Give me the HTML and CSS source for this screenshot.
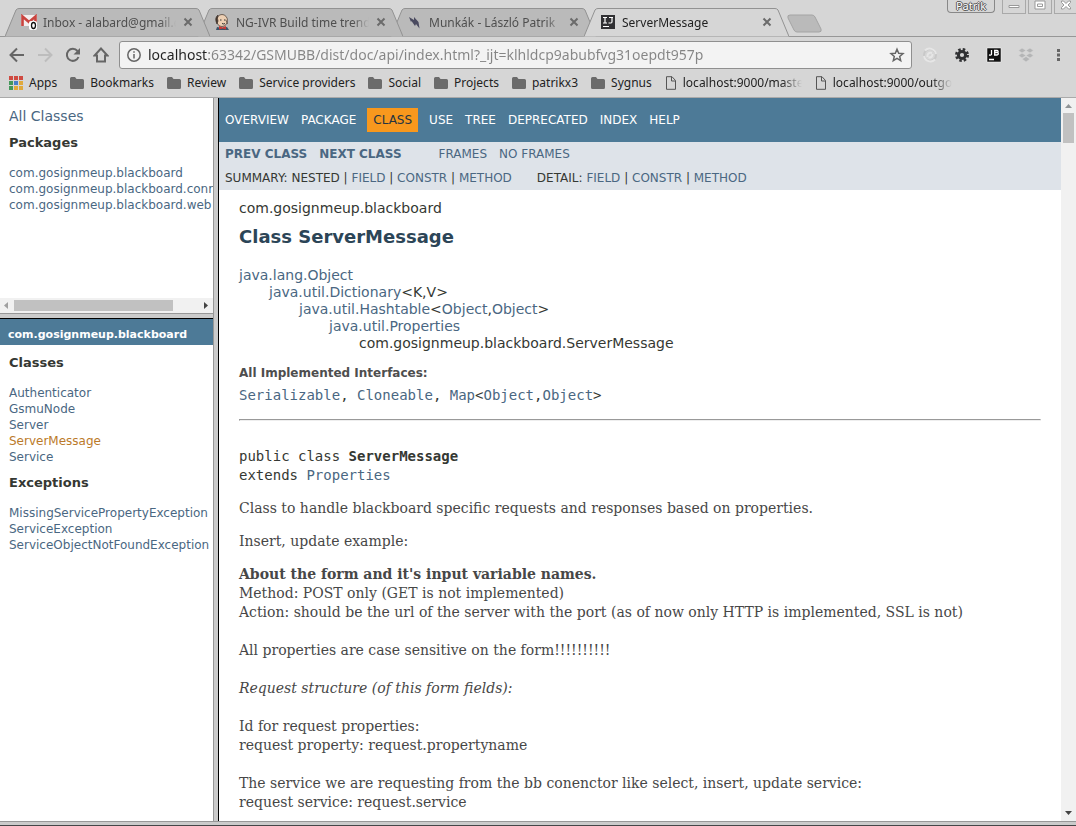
FILE: index.html
```
<!DOCTYPE html>
<html lang="en">
  <head>
    <meta charset="UTF-8" />
    <meta name="viewport" content="width=device-width, initial-scale=1.0" />
    <title>ServerMessage</title>
    <link rel="stylesheet" href="styles.css">
  </head>
  <body>
    <div class="browser">
      <header class="chrome">
        <div class="tabstrip">
          <div class="tab tab--first">
            <svg class="tab-shape" viewBox="0 0 205 29"><path d="M0 28.5 11 2Q12 .5 14 .5H191Q193 .5 194 2L205 28.5"/></svg>
            <svg class="favicon" viewBox="0 0 16 16"><path d="M0 1h16v11H0z" fill="#f4eeee"/><path d="M1.500 12V2.500L8 8l6.500-5.500V12" fill="none" stroke="#c9443f" stroke-width="2.600"/><rect x="8" y="7" width="8" height="9" rx="2" fill="#fff"/><ellipse cx="12.500" cy="11.500" rx="2" ry="3" fill="none" stroke="#111" stroke-width="1.300"/></svg>
            <span class="tab-title">Inbox - alabard@gmail.com</span>
            <button class="tab-close" aria-label="Close tab"><svg viewBox="0 0 10 10"><path d="M1.500 1.500l7 7M8.500 1.500l-7 7"/></svg></button>
          </div>
          <div class="tab tab--second">
            <svg class="tab-shape" viewBox="0 0 205 29"><path d="M0 28.5 11 2Q12 .5 14 .5H191Q193 .5 194 2L205 28.5"/></svg>
            <svg class="favicon" viewBox="0 0 16 16"><path d="M2 16l1-3 5 1 5-1 2 3z" fill="#3b5368"/><ellipse cx="8" cy="6.500" rx="5.500" ry="6" fill="#edd0b4" stroke="#54463c" stroke-width=".8"/><path d="M3 10Q0 4 4 1q-1 4 0 6zM12 6l1.500 4" fill="#44372f" stroke="#44372f" stroke-width=".7"/><path d="M6 6h1.500M10 6h1.500M8 9.500q2 1 3 0" stroke="#333" fill="none"/><path d="M5 12l3.500 1.500L12 12v3.500l-3.500-1-3.500 1z" fill="#c93a35"/></svg>
            <span class="tab-title">NG-IVR Build time trend [Jenkins]</span>
            <button class="tab-close" aria-label="Close tab"><svg viewBox="0 0 10 10"><path d="M1.500 1.500l7 7M8.500 1.500l-7 7"/></svg></button>
          </div>
          <div class="tab tab--third">
            <svg class="tab-shape" viewBox="0 0 205 29"><path d="M0 28.5 11 2Q12 .5 14 .5H191Q193 .5 194 2L205 28.5"/></svg>
            <svg class="favicon" viewBox="0 0 16 16"><path d="M2 3l5 3V3l4.500 5 1 6.500L9 10l-1 2-3.500-5L4 8z" fill="#4b4b60"/></svg>
            <span class="tab-title">Munkák - László Patrik</span>
            <button class="tab-close" aria-label="Close tab"><svg viewBox="0 0 10 10"><path d="M1.500 1.500l7 7M8.500 1.500l-7 7"/></svg></button>
          </div>
          <div class="tab tab--active">
            <svg class="tab-shape" viewBox="0 0 205 29"><path d="M0 28.5 11 2Q12 .5 14 .5H191Q193 .5 194 2L205 28.5"/></svg>
            <svg class="favicon" viewBox="0 0 16 16"><path d="M1 1h14v14H1z" fill="#303033"/><path d="M3 3.500h4M5 3.500v5M3 9h4M9 3.500h4M12 3.500v4Q12 9 11 9H8.500M3 12.500h6" fill="none" stroke="#fff" stroke-width="1.200"/></svg>
            <span class="tab-title">ServerMessage</span>
            <button class="tab-close" aria-label="Close tab"><svg viewBox="0 0 10 10"><path d="M1.500 1.500l7 7M8.500 1.500l-7 7"/></svg></button>
          </div>
          <button class="new-tab" aria-label="New tab"><svg viewBox="0 0 36 19"><path d="M3 1H25Q27 1 28 3L34 15Q35 18 32 18H10Q8 18 7 16L1 4Q0 1 3 1z"/></svg></button>
          <div class="window-controls">
            <button class="profile">Patrik</button>
            <button class="window-button" aria-label="Minimize"><svg viewBox="0 0 14 12"><path d="M2 5.500h10v2H2z"/></svg></button>
            <button class="window-button" aria-label="Maximize"><svg viewBox="0 0 14 12"><path d="M2 1h10v8H2zM4.500 4h5v2.500h-5z"/></svg></button>
            <button class="window-button" aria-label="Close"><svg viewBox="0 0 14 12"><path d="M2.500 1h2L7 3.500 9.500 1h2v1.500L9 5l2.500 2.500V9h-2L7 6.500 4.500 9h-2V7.500L5 5 2.500 2.500z"/></svg></button>
          </div>
        </div>

        <div class="toolbar">
          <div class="toolbar-nav">
            <button class="icon-button" aria-label="Back"><svg viewBox="0 0 16 16"><path d="M15 8H2.500M8 1.500L1.500 8 8 14.500"/></svg></button>
            <button class="icon-button icon-button--off" aria-label="Forward"><svg viewBox="0 0 16 16"><path d="M1 8h12.500M8 1.500L14.500 8 8 14.500"/></svg></button>
            <button class="icon-button" aria-label="Reload"><svg viewBox="0 0 16 16"><path d="M13.500 10A6 6 0 1 1 12.500 4"/><path d="M15 1v6.500H8.500z" class="solid"/></svg></button>
            <button class="icon-button" aria-label="Home"><svg viewBox="0 0 16 16"><path d="M8 1.500L1.500 8.500H4v6h8v-6h2.500z"/></svg></button>
          </div>
          <div class="omnibox">
            <svg class="info" viewBox="0 0 14 14"><circle cx="7" cy="7" r="6.200"/><path d="M7 6v4.500M7 3.300v1.500"/></svg>
            <input class="url" type="text" aria-label="Address" spellcheck="false" value="localhost:63342/GSMUBB/dist/doc/api/index.html?_ijt=klhldcp9abubfvg31oepdt957p">
            <button class="star" aria-label="Bookmark this page"><svg viewBox="0 0 16 16"><path d="M8 2.200l1.700 4 4.300.4-3.300 2.800 1 4.200L8 11.400l-3.700 2.200 1-4.200L2 6.600l4.300-.4z"/></svg></button>
          </div>
          <div class="extensions">
            <button class="icon-button" aria-label="Extension"><svg class="orb" viewBox="0 0 16 16"><circle cx="8" cy="8" r="6"/><path class="orb-shine" d="M3 3.500A6.500 6.500 0 0 1 14 7M13 12.500A6.500 6.500 0 0 1 2 9M5.500 10Q5 5 10 6M10.500 7q0 4-4 3.500"/></svg></button>
            <button class="icon-button" aria-label="Settings"><svg class="gear" viewBox="0 0 16 16"><circle class="gear-teeth" cx="8" cy="8" r="5.700"/><circle cx="8" cy="8" r="3.600"/></svg></button>
            <button class="icon-button" aria-label="JetBrains"><svg class="jetbrains" viewBox="0 0 16 16"><path class="jetbrains-box" d="M1 1h14v14H1z"/><path d="M5.500 3v4q0 1.500-2.500 1M8.700 3v5.500M8 3.500h3q1.500 0 1 1.900H9M9 5.700h2.500q2 1.300-.3 2.300H8M3 12.500h5"/></svg></button>
            <button class="icon-button" aria-label="Dropbox"><svg class="dropbox" viewBox="0 0 16 16"><path d="M4 1l4 2.500L4 6 .5 3.500zM12 1l3.500 2.500L12 6 8 3.500zM.5 8.500L4 6l4 2.500L4 11zM8 8.500L12 6l3.500 2.500L12 11zM4 12l4-2.500 4 2.500-4 3z"/></svg></button>
            <button class="icon-button" aria-label="Menu"><svg viewBox="0 0 16 16"><path d="M7 2h3v3H7zM7 6.500h3v3H7zM7 11h3v3H7z" class="solid"/></svg></button>
          </div>
        </div>

        <nav class="bookmarks">
          <a href="#"><svg class="apps" viewBox="0 0 14 14"><path d="M0 0h4v4H0zM5 0h4v4H5zM10 0h4v4h-4z" fill="#cf4a41"/><path d="M0 5h4v4H0zM0 10h4v4H0z" fill="#43985a"/><path d="M5 5h4v4H5z" fill="#467fc8"/><path d="M10 5h4v4h-4zM5 10h4v4H5zM10 10h4v4h-4z" fill="#e0a93b"/></svg>Apps</a>
          <a href="#"><svg class="folder" viewBox="0 0 14 12"><path d="M0 1.500Q0 0 1.500 0H5l1.500 2h6Q14 2 14 3.500v7q0 1.500-1.500 1.500h-11Q0 12 0 10.500z"/></svg>Bookmarks</a>
          <a href="#"><svg class="folder" viewBox="0 0 14 12"><path d="M0 1.500Q0 0 1.500 0H5l1.500 2h6Q14 2 14 3.500v7q0 1.500-1.500 1.500h-11Q0 12 0 10.500z"/></svg>Review</a>
          <a href="#"><svg class="folder" viewBox="0 0 14 12"><path d="M0 1.500Q0 0 1.500 0H5l1.500 2h6Q14 2 14 3.500v7q0 1.500-1.500 1.500h-11Q0 12 0 10.500z"/></svg>Service providers</a>
          <a href="#"><svg class="folder" viewBox="0 0 14 12"><path d="M0 1.500Q0 0 1.500 0H5l1.500 2h6Q14 2 14 3.500v7q0 1.500-1.500 1.500h-11Q0 12 0 10.500z"/></svg>Social</a>
          <a href="#"><svg class="folder" viewBox="0 0 14 12"><path d="M0 1.500Q0 0 1.500 0H5l1.500 2h6Q14 2 14 3.500v7q0 1.500-1.500 1.500h-11Q0 12 0 10.500z"/></svg>Projects</a>
          <a href="#"><svg class="folder" viewBox="0 0 14 12"><path d="M0 1.500Q0 0 1.500 0H5l1.500 2h6Q14 2 14 3.500v7q0 1.500-1.500 1.500h-11Q0 12 0 10.500z"/></svg>patrikx3</a>
          <a href="#"><svg class="folder" viewBox="0 0 14 12"><path d="M0 1.500Q0 0 1.500 0H5l1.500 2h6Q14 2 14 3.500v7q0 1.500-1.500 1.500h-11Q0 12 0 10.500z"/></svg>Sygnus</a>
          <a href="#"><svg class="file" viewBox="0 0 12 14"><path d="M1.500.7H7L10.500 4.500v8.800h-9zM6.500 1v4h4"/></svg><span class="bookmark-label">localhost:9000/master</span></a>
          <a href="#"><svg class="file" viewBox="0 0 12 14"><path d="M1.500.7H7L10.500 4.500v8.800h-9zM6.500 1v4h4"/></svg><span class="bookmark-label">localhost:9000/outgoing</span></a>
        </nav>
      </header>

      <div class="frameset">
        <div class="left-frames">
          <section class="package-list">
            <div class="frame-body">
              <a class="all-classes" href="#">All Classes</a>
              <h2 class="frame-title">Packages</h2>
              <ul class="frame-links">
                <li><a href="#">com.gosignmeup.blackboard</a></li>
                <li><a href="#">com.gosignmeup.blackboard.connector</a></li>
                <li><a href="#">com.gosignmeup.blackboard.web</a></li>
              </ul>
            </div>
            <div class="hscroll">
              <svg viewBox="0 0 14 15"><path d="M8 4v7L4 7.500z" fill="#a0a0a0"/></svg>
              <div class="hscroll-thumb"></div>
              <svg viewBox="0 0 14 15"><path d="M5 4v7l4-3.500z" fill="#444"/></svg>
            </div>
          </section>
          <section class="package-frame">
            <h1 class="bar"><a href="#">com.gosignmeup.blackboard</a></h1>
            <div class="frame-body">
              <h2 class="frame-title">Classes</h2>
              <ul class="frame-links">
                <li><a href="#">Authenticator</a></li>
                <li><a href="#">GsmuNode</a></li>
                <li><a href="#">Server</a></li>
                <li><a class="hover" href="#">ServerMessage</a></li>
                <li><a href="#">Service</a></li>
              </ul>
              <h2 class="frame-title">Exceptions</h2>
              <ul class="frame-links">
                <li><a href="#">MissingServicePropertyException</a></li>
                <li><a href="#">ServiceException</a></li>
                <li><a href="#">ServiceObjectNotFoundException</a></li>
              </ul>
            </div>
          </section>
        </div>

        <main class="class-frame">
          <div class="document">
            <ul class="top-nav">
              <li><a href="#">Overview</a></li>
              <li><a href="#">Package</a></li>
              <li class="nav-current">Class</li>
              <li><a href="#">Use</a></li>
              <li><a href="#">Tree</a></li>
              <li><a href="#">Deprecated</a></li>
              <li><a href="#">Index</a></li>
              <li><a href="#">Help</a></li>
            </ul>
            <div class="sub-nav">
              <div class="sub-nav-row">
                <ul class="nav-list">
                  <li><a class="strong" href="#">Prev Class</a></li>
                  <li><a class="strong" href="#">Next Class</a></li>
                </ul>
                <ul class="nav-list nav-list--frames">
                  <li><a href="#">Frames</a></li>
                  <li><a href="#">No Frames</a></li>
                </ul>
              </div>
              <div class="sub-nav-row sub-nav-row--detail">
                <div>Summary: Nested | <a href="#">Field</a> | <a href="#">Constr</a> | <a href="#">Method</a></div>
                <div>Detail: <a href="#">Field</a> | <a href="#">Constr</a> | <a href="#">Method</a></div>
              </div>
            </div>

            <div class="content">
              <div class="subtitle">com.gosignmeup.blackboard</div>
              <h2 class="title">Class ServerMessage</h2>
              <ul class="inheritance">
                <li><a href="#">java.lang.Object</a></li>
                <li>
                  <ul class="inheritance">
                    <li><a href="#">java.util.Dictionary</a>&lt;K,V&gt;</li>
                    <li>
                      <ul class="inheritance">
                        <li><a href="#">java.util.Hashtable</a>&lt;<a href="#">Object</a>,<a href="#">Object</a>&gt;</li>
                        <li>
                          <ul class="inheritance">
                            <li><a href="#">java.util.Properties</a></li>
                            <li>
                              <ul class="inheritance">
                                <li>com.gosignmeup.blackboard.ServerMessage</li>
                              </ul>
                            </li>
                          </ul>
                        </li>
                      </ul>
                    </li>
                  </ul>
                </li>
              </ul>
              <dl class="interfaces">
                <dt>All Implemented Interfaces:</dt>
                <dd><a href="#">Serializable</a>, <a href="#">Cloneable</a>, <a href="#">Map</a>&lt;<a href="#">Object</a>,<a href="#">Object</a>&gt;</dd>
              </dl>
              <hr>
              <pre class="signature">public class <b>ServerMessage</b>
extends <a href="#">Properties</a></pre>
              <div class="block">
                <p>Class to handle blackboard specific requests and responses based on properties.</p>
                <p>Insert, update example:</p>
                <p>
                  <b>About the form and it's input variable names.</b><br>
                  Method: POST only (GET is not implemented)<br>
                  Action: should be the url of the server with the port (as of now only HTTP is implemented, SSL is not)<br>
                  <br>
                  All properties are case sensitive on the form!!!!!!!!!!<br>
                  <br>
                  <i>Request structure (of this form fields):</i><br>
                  <br>
                  Id for request properties:<br>
                  request property: request.propertyname<br>
                  <br>
                  The service we are requesting from the bb conenctor like select, insert, update service:<br>
                  request service: request.service
                </p>
              </div>
            </div>
          </div>
          <div class="vscroll">
            <svg viewBox="0 0 15 15"><path d="M4 10h7L7.500 6z" fill="#909496"/></svg>
            <div class="vscroll-thumb"></div>
            <svg class="vscroll-down" viewBox="0 0 15 15"><path d="M4 5h7L7.500 9z" fill="#444"/></svg>
          </div>
        </main>
      </div>
    </div>
  </body>
</html>
```
FILE: styles.css
```
:root {
  --chrome-bg: #d6d6d6;
  --tab-bg: #bababa;
  --line: #979797;
  --bar: #4d7a97;
  --subnav: #dee3e9;
  --link: #4a6782;
  --text: #353833;
  --text-soft: #474747;
}
* {
  box-sizing: border-box;
}
body {
  margin: 0;
  color: var(--text);
  font-family: "DejaVu Sans", Arial, sans-serif;
  font-size: 14px;
}
ul {
  list-style: none;
  margin: 0;
  padding: 0;
}
a {
  color: var(--link);
  text-decoration: none;
}
button {
  border: 0;
  padding: 0;
  background: none;
  font: inherit;
}
svg {
  display: block;
  flex: none;
}

.browser {
  display: flex;
  flex-direction: column;
  height: 100vh;
  overflow: hidden;
  background: #cbcbcb;
  border-bottom: 1px solid #454648;
  padding-bottom: 3px;
}

/* window chrome */
.chrome {
  flex: none;
  background: var(--chrome-bg);
  border-bottom: 1px solid #aaa;
  font-family: "Noto Sans", sans-serif;
  font-size: 12px;
}
.tabstrip {
  display: flex;
  align-items: flex-end;
  height: 37px;
  padding-left: 5px;
  border-bottom: 1px solid var(--line);
}
.tab {
  position: relative;
  display: flex;
  align-items: center;
  width: 205px;
  height: 28px;
  padding: 0 17px 0 16px;
  margin-right: -12px;
  color: #4f4f4f;
}
.tab-shape {
  position: absolute;
  left: 0;
  top: 0;
  z-index: -1;
  width: 205px;
  height: 29px;
  fill: var(--tab-bg);
  stroke: #929292;
}
.tab--first {
  z-index: 3;
}
.tab--second {
  z-index: 2;
}
.tab--third {
  z-index: 1;
}
.tab--active {
  z-index: 4;
  color: #222;
}
.tab--active .tab-shape {
  fill: var(--chrome-bg);
}
.favicon {
  width: 16px;
  height: 16px;
  margin-right: 6px;
}
.tab-title {
  flex: 1;
  min-width: 0;
  overflow: hidden;
  white-space: nowrap;
  margin-right: 7px;
  mask-image: linear-gradient(to right, #000 calc(100% - 16px), transparent);
}
.tab-close svg {
  width: 10px;
  height: 10px;
  stroke: #6b6b6b;
  stroke-width: 2;
}
.new-tab {
  align-self: center;
  margin: 10px 0 0 10px;
}
.new-tab svg {
  width: 36px;
  height: 19px;
  fill: var(--tab-bg);
  stroke: #a4a4a4;
}
.window-controls {
  display: flex;
  gap: 2px;
  align-self: flex-start;
  margin-left: auto;
}
.profile {
  width: 48px;
  height: 13px;
  margin-right: 5px;
  border: 1px solid #888;
  border-top: 0;
  border-radius: 0 0 4px 4px;
  font-size: 11px;
  line-height: 12px;
  color: #fff;
  text-shadow: 1px 0 #555, -1px 0 #555, 0 1px #555, 0 -1px #555;
}
.window-button {
  display: flex;
  justify-content: center;
  width: 24px;
  height: 14px;
  border: 1px solid #a9a9a9;
  border-top: 0;
}
.window-button:last-child {
  width: 22px;
  border-right: 0;
}
.window-button svg {
  width: 14px;
  height: 12px;
  fill: #fff;
  stroke: #999;
}

.toolbar {
  display: flex;
  align-items: center;
  height: 36px;
  padding: 0 8px 0 9px;
}
.toolbar-nav {
  display: flex;
  gap: 12px;
  margin-right: 10px;
}
.icon-button svg {
  width: 16px;
  height: 16px;
  fill: none;
  stroke: #666;
  stroke-width: 2;
}
.icon-button--off svg {
  stroke: #bdbdbd;
}
.icon-button .solid {
  fill: #666;
  stroke: none;
}
.icon-button .orb {
  stroke: #c8c8c8;
}
.orb-shine {
  stroke: #e6e6e6;
}
.icon-button .gear {
  stroke: #303133;
  stroke-width: 3;
}
.gear-teeth {
  stroke-width: 2.6;
  stroke-dasharray: 2.48 2;
}
.icon-button .jetbrains {
  stroke: #fff;
  stroke-width: 1.3;
}
.jetbrains-box {
  fill: #111;
  stroke-width: 0.5;
}
.icon-button .dropbox {
  fill: #b4b5b6;
  stroke: #d6d6d6;
  stroke-width: 0.6;
}
.omnibox {
  flex: 1;
  display: flex;
  align-items: center;
  height: 28px;
  padding: 0 6px 0 7px;
  background: #f3f3f3;
  border: 1px solid #8f8f8f;
  border-radius: 3px;
}
.info {
  width: 14px;
  height: 14px;
  margin-right: 7px;
  fill: none;
  stroke: #666;
  stroke-width: 1.5;
}
.url {
  flex: 1;
  min-width: 0;
  height: 24px;
  padding: 0 0 2px;
  border: 0;
  outline: 0;
  font-family: "Noto Sans", sans-serif;
  font-size: 14px;
  /* host is dark, the rest of the address is grey */
  color: transparent;
  background: linear-gradient(to right, #222 60px, #858585 60px);
  background-clip: text;
}
.star svg {
  width: 16px;
  height: 16px;
  fill: none;
  stroke: #666;
  stroke-width: 1.5;
}
.extensions {
  display: flex;
  gap: 16px;
  margin-left: 10px;
  padding-right: 2px;
}
.bookmarks {
  display: flex;
  align-items: center;
  gap: 13px;
  height: 24px;
  padding: 0 9px 5px;
  overflow: hidden;
}
.bookmarks a {
  display: flex;
  flex: none;
  align-items: center;
  gap: 6px;
  color: #222;
  line-height: 18px;
  white-space: nowrap;
}
.apps {
  width: 14px;
  height: 14px;
}
.folder {
  width: 14px;
  height: 12px;
  fill: #6b6b6b;
}
.file {
  width: 12px;
  height: 14px;
  fill: none;
  stroke: #555;
}
.bookmark-label {
  width: 119px;
  overflow: hidden;
  mask-image: linear-gradient(to right, #000 calc(100% - 20px), transparent);
}

/* frames */
.frameset {
  flex: 1;
  display: flex;
  min-height: 0;
  border-bottom: 1px solid var(--line);
}
.left-frames {
  flex: none;
  display: flex;
  flex-direction: column;
  gap: 4px;
  width: 214px;
  border-right: 1px solid var(--line);
}
.package-list {
  flex: 3;
  display: flex;
  flex-direction: column;
  min-height: 0;
  background: #fff;
  border-bottom: 1px solid var(--line);
}
.package-frame {
  flex: 7;
  min-height: 0;
  overflow: hidden;
  background: #fff;
  border-top: 1px solid #000;
}
.frame-body {
  flex: 1;
  padding: 10px 0 0 9px;
  overflow: hidden;
  white-space: nowrap;
}
.all-classes {
  display: block;
  line-height: 17px;
}
.frame-title {
  margin: 0 0 14px;
  font-size: 13px;
  line-height: 16px;
}
.all-classes + .frame-title {
  margin-top: 10px;
}
.frame-links {
  font-size: 12px;
  line-height: 16px;
}
.frame-links + .frame-title {
  margin-top: 10px;
}
.hover {
  color: #bb7a2a;
}
.bar {
  margin: 0;
  padding: 10px 8px 4px;
  background: var(--bar);
  font-size: 11px;
  line-height: 12px;
}
.bar a {
  color: #fff;
}
.hscroll {
  flex: none;
  display: flex;
  height: 15px;
  background: #f1f1f1;
}
.hscroll svg {
  width: 14px;
  height: 15px;
}
.hscroll-thumb {
  width: 159px;
  height: 11px;
  margin: 2px auto 2px 0;
  background: #c1c1c1;
}

/* class page */
.class-frame {
  flex: 1;
  display: flex;
  min-width: 0;
  margin-left: 4px;
  background: #fff;
  border-left: 1px solid #000;
}
.document {
  flex: 1;
  min-width: 0;
  overflow: hidden;
}
.vscroll {
  display: flex;
  flex-direction: column;
  width: 15px;
  background: #f1f1f1;
}
.vscroll svg {
  width: 15px;
  height: 15px;
}
.vscroll-thumb {
  height: 30px;
  margin: 0 2px;
  background: #c1c1c1;
}
.vscroll-down {
  margin-top: auto;
}
.top-nav {
  display: flex;
  align-items: center;
  gap: 12px;
  height: 44px;
  padding: 0 6px;
  background: var(--bar);
  color: #fff;
  font-size: 12px;
  line-height: 14px;
  text-transform: uppercase;
}
.top-nav a {
  color: #fff;
}
.nav-current {
  margin: 0 -1px;
  padding: 5px 6px;
  background: #f8981d;
  color: #253441;
}
.sub-nav {
  height: 48px;
  padding: 0 6px;
  background: var(--subnav);
  font-size: 12px;
  text-transform: uppercase;
}
.sub-nav-row {
  display: flex;
  align-items: center;
  height: 24px;
}
.sub-nav-row--detail {
  gap: 25px;
}
.nav-list {
  display: flex;
  gap: 12px;
}
.nav-list--frames {
  margin-left: 37px;
}
.strong {
  font-weight: bold;
}
.content {
  padding: 10px 20px;
}
.subtitle {
  line-height: 17px;
}
.title {
  margin: 8px 0 18px;
  color: #2c4557;
  font-size: 18px;
  line-height: 24px;
}
.inheritance {
  line-height: 17px;
}
.inheritance .inheritance {
  padding-left: 30px;
}
.interfaces {
  margin: 12px 0 15px;
}
.interfaces dt {
  color: #4e4e4e;
  font-size: 12px;
  font-weight: bold;
  line-height: 18px;
}
.interfaces dd {
  margin: 4px 0 0;
  font-family: "DejaVu Sans Mono", monospace;
  line-height: 18px;
}
hr {
  margin: 0 0 26px;
  border: 1px solid;
  border-color: #999 #eee #eee #999;
}
.signature {
  margin: 0;
  font-family: "DejaVu Sans Mono", monospace;
  font-size: 14px;
  line-height: 19px;
}
.block {
  color: var(--text-soft);
  font-family: "DejaVu Serif", Georgia, serif;
  line-height: 19px;
}
.block p {
  margin: 14px 0;
}
```
